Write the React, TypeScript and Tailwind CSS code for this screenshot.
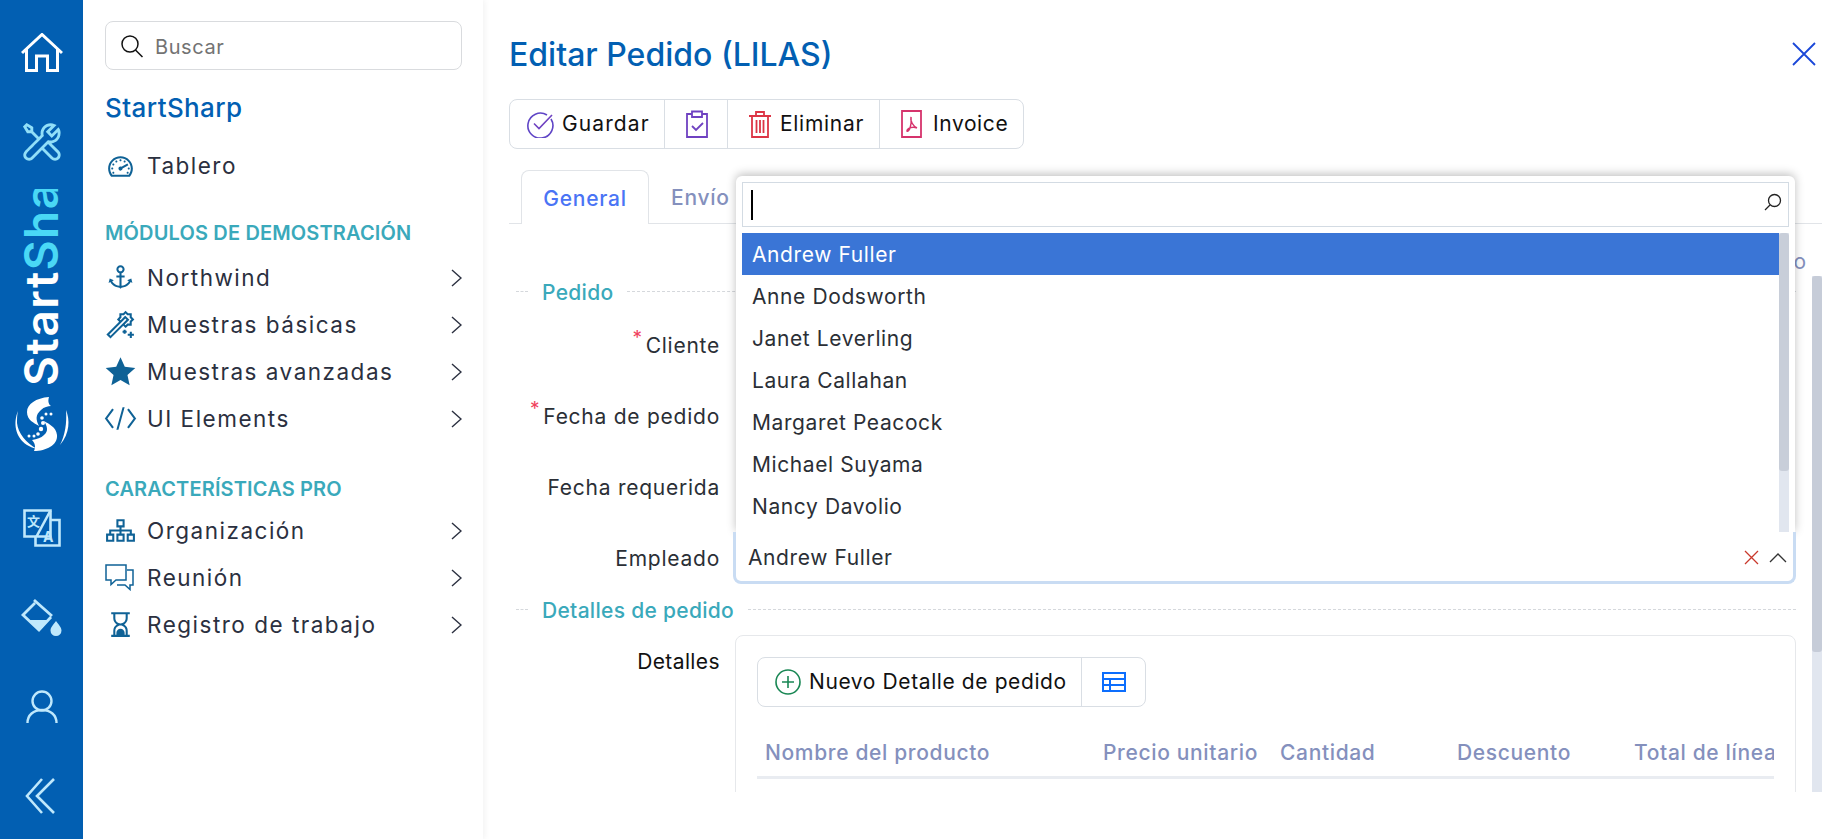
import {
  LiaAnchorSolid,
  LiaCodeSolid,
  LiaHourglassEndSolid,
  LiaMagicSolid,
  LiaSitemapSolid,
  LiaStarSolid,
  LiaTachometerAltSolid,
  LiaToolsSolid,
} from "react-icons/lia";

const employees = [
  "Anne Dodsworth",
  "Janet Leverling",
  "Laura Callahan",
  "Margaret Peacock",
  "Michael Suyama",
  "Nancy Davolio",
];

function Chevron() {
  return (
    <svg width="11" height="18" viewBox="0 0 11 18" fill="none" stroke="#2b3040" strokeWidth="1.4" className="ml-auto shrink-0">
      <path d="M1 1l9 8-9 8" />
    </svg>
  );
}

function NavItem({ icon, label }: { icon: React.ReactNode; label: string }) {
  return (
    <div className="flex h-[47px] items-center">
      <span className="flex w-[42px] shrink-0 -translate-x-[1px] text-[#0f6296]">{icon}</span>
      <span className="text-[22.5px] tracking-[1.5px] text-[#2b3040]">{label}</span>
      <Chevron />
    </div>
  );
}

function SectionTitle({ label, className }: { label: string; className: string }) {
  return (
    <div className={`flex items-center ${className}`}>
      <span className="w-[12px] border-t border-dashed border-[#d5d8dc]" />
      <span className="mx-[14px] pt-[3px] text-[21px] font-medium tracking-[0.3px] text-[#3aa9bb]">{label}</span>
      <span className="flex-1 border-t border-dashed border-[#d5d8dc]" />
    </div>
  );
}

function FormRow({ label, required, children }: { label: string; required?: boolean; children?: React.ReactNode }) {
  return (
    <div className="flex h-[71px] items-center">
      <div className="w-[211px] pt-[6px] text-right text-[21px] tracking-[0.75px] text-[#2b2f36]">
        {required && <span className="relative -top-[9px] mr-[3px] text-[19px] text-[#f0415d]">*</span>}
        {label}
      </div>
      <div className="ml-[13px] flex-1">{children}</div>
    </div>
  );
}

function Rail() {
  return (
    <aside className="flex w-[83px] shrink-0 flex-col items-center bg-[#025fb2]">
      <svg className="mt-[33px]" width="42" height="39" viewBox="0 0 42 39" fill="none" stroke="#fff" strokeWidth="3">
        <path d="M1 20L21 1.500 41 20M5.500 16v21.500h10V23h11v14.500h10V16" />
      </svg>
      <LiaToolsSolid className="mt-[47px] text-[#91dff8]" size={46} />
      <div className="mt-[24px] h-[197px] overflow-hidden whitespace-nowrap text-[46px] font-semibold leading-[41px] tracking-[1.5px] text-white [writing-mode:vertical-rl] rotate-180">
        Start<span className="text-[#4ad8f5]">Sharp</span>
      </div>
      {/* logo */}
      <svg className="mt-[7px]" width="64" height="64" viewBox="0 0 64 64" fill="#fff">
        <path d="M39 4C26 5 17 11 17 19c0 8 7 11 12 14-3-6-4-11 2-16 3-3 7-4 10-4-3-2-3-6-2-9z" />
        <path d="M24 58c12 0 24-6 23-16-1-8-8-11-13-14 3 5 5 10 0 14-3 3-7 4-12 5 3 3 4 7 2 11z" />
        <path d="M8 18C3 30 5 44 17 52c3 2 7 3 10 4C16 50 8 40 7 30c0-4 0-8 1-12z" />
        <path d="M56 17c4 10 4 23-6 35 5-10 7-22 6-35z" />
        <circle cx="36" cy="21" r="1.500" />
        <circle cx="41" cy="21" r="1.500" />
        <circle cx="32" cy="25" r="1.800" />
        <circle cx="33" cy="30" r="2" />
        <circle cx="31" cy="36" r="2.200" />
        <circle cx="28" cy="41" r="1.800" />
        <circle cx="24" cy="43" r="1.500" />
        <circle cx="19" cy="43" r="1.500" />
      </svg>
      <svg className="mt-[52px]" width="38" height="38" viewBox="0 0 38 38" fill="none" stroke="#bfe8fc" strokeWidth="2.600">
        <path d="M1.500 1.500h26v26h-26z" />
        <path d="M27.500 11h9v25.500h-24V27.500" />
        <path d="M27.500 1.500l-14 26" />
        <text x="4" y="17" fontSize="13" fontWeight="700" fill="#bfe8fc" stroke="none" fontFamily="Noto Sans CJK SC, sans-serif">文</text>
        <text x="20" y="33" fontSize="14" fontWeight="700" fill="#bfe8fc" stroke="none" fontFamily="Inter, sans-serif">A</text>
      </svg>
      <svg className="mt-[45px]" width="54" height="54" viewBox="0 0 54 54">
        <path d="M19 8l18 16M20 11L8 23l16 15 12-13" fill="none" stroke="#bfe8fc" strokeWidth="2.800" />
        <path d="M13 28h20l-9 9z" fill="#bfe8fc" />
        <path d="M41 29c3 4 5.500 6.500 5.500 9.500a5.500 5.500 0 0 1-11 0c0-3 2.500-5.500 5.500-9.500z" fill="#bfe8fc" />
      </svg>
      <svg className="mt-[44px]" width="32" height="34" viewBox="0 0 32 34" fill="none" stroke="#bfe8fc" strokeWidth="2.400">
        <circle cx="16" cy="11" r="9.500" />
        <path d="M1.500 33c0-8 6-13 14.500-13s14.500 5 14.500 13" />
      </svg>
      <svg className="mt-[54px] -translate-x-[2px]" width="30" height="36" viewBox="0 0 30 36" fill="none" stroke="#bfe8fc" strokeWidth="2.600">
        <path d="M17 1L2 18l15 17M29 1L12 18l17 17" />
      </svg>
    </aside>
  );
}

function Sidebar() {
  return (
    <nav className="w-[400px] shrink-0 bg-white pl-[22px] pr-[21px] pt-[21px] shadow-[2px_0_6px_rgba(0,0,0,0.05)]">
      <div className="flex h-[49px] w-[357px] items-center rounded-[8px] border border-[#d9dbde] pl-[14px]">
        <svg width="24" height="24" viewBox="0 0 24 24" fill="none" stroke="#111" strokeWidth="1.500">
          <circle cx="10" cy="10" r="8" />
          <path d="M15.500 16l7 7" />
        </svg>
        <span className="ml-[11px] pt-[2px] text-[20px] tracking-[0.6px] text-[#737373]">Buscar</span>
      </div>
      <div className="mt-[18px] text-[26px] font-medium tracking-[0.4px] text-[#025fb2]">StartSharp</div>
      <div className="mt-[19px] flex h-[40px] items-center">
        <span className="flex w-[42px] -translate-x-[1px] text-[#0f6296]">
          <LiaTachometerAltSolid size={33} />
        </span>
        <span className="text-[22.5px] tracking-[1.5px] text-[#2b3040]">Tablero</span>
      </div>
      <div className="mt-[32px] text-[20px] font-semibold tracking-[0.15px] text-[#3aa9bb]">MÓDULOS DE DEMOSTRACIÓN</div>
      <div className="mt-[6px]">
        <NavItem icon={<LiaAnchorSolid size={33} />} label="Northwind" />
        <NavItem icon={<LiaMagicSolid size={33} />} label="Muestras básicas" />
        <NavItem icon={<LiaStarSolid size={33} />} label="Muestras avanzadas" />
        <NavItem icon={<LiaCodeSolid size={33} />} label="UI Elements" />
      </div>
      <div className="mt-[32px] text-[20px] font-semibold tracking-[0.15px] text-[#3aa9bb]">CARACTERÍSTICAS PRO</div>
      <div className="mt-[3px]">
        <NavItem icon={<LiaSitemapSolid size={33} />} label="Organización" />
        <NavItem
          icon={
            <svg className="ml-[1px]" width="29" height="27" viewBox="0 0 29 27" fill="none" stroke="currentColor" strokeWidth="1.500">
              <path d="M1 1h20v15H11l-5 4.500V16H1zM22 6h6v15h-3v4.500L20 21h-8" />
            </svg>
          }
          label="Reunión"
        />
        <NavItem icon={<LiaHourglassEndSolid size={33} />} label="Registro de trabajo" />
      </div>
    </nav>
  );
}

function EmployeeDropdown() {
  return (
    <div className="absolute left-[246px] top-[176px] z-10 h-[357px] w-[1059px] rounded-t-[6px] bg-white px-[6px] pt-[6px] shadow-[0_-2px_10px_rgba(0,0,0,0.25)]">
      <div className="flex h-[45px] items-center justify-between border border-[#d3dbe3] pl-[8px] pr-[6px]">
        <span className="h-[30px] w-[2px] bg-black" />
        <svg className="-translate-y-[3px]" width="18" height="18" viewBox="0 0 18 18" fill="none" stroke="#222" strokeWidth="1.300">
          <circle cx="10.500" cy="7.500" r="6" />
          <path d="M6 12l-5 5" />
        </svg>
      </div>
      <div className="mt-[6px] flex">
        <ul className="flex-1 text-[21px] tracking-[0.6px] text-[#2b2f36]">
          <li className="flex h-[42px] items-center bg-[#3a75d6] pl-[10px] pt-[2px] text-white">Andrew Fuller</li>
          {employees.map((name) => (
            <li key={name} className="flex h-[42px] items-center pl-[10px] pt-[2px]">
              {name}
            </li>
          ))}
        </ul>
        <div className="h-[300px] w-[10px] bg-[#e1e6ef]">
          <div className="h-[238px] rounded-[3px] bg-[#c8ced9]" />
        </div>
      </div>
    </div>
  );
}

function Content() {
  return (
    <main className="relative flex min-w-0 flex-1 flex-col pl-[19px] pr-[26px]">
      <div className="flex h-[99px] shrink-0 items-start justify-between pt-[34px]">
        <h1 className="whitespace-nowrap text-[32px] font-medium leading-[42px] text-[#025fb2]">Editar Pedido (LILAS)</h1>
        <svg className="mr-[6px] mt-[8px]" width="24" height="24" viewBox="0 0 24 24" stroke="#1a47d8" strokeWidth="1.800">
          <path d="M1 1l22 22M23 1L1 23" />
        </svg>
      </div>

      <div className="flex h-[50px] w-[515px] shrink-0 items-stretch rounded-[8px] border border-[#d9dee4] text-[21px] tracking-[0.6px] text-[#111]">
        <div className="flex w-[154px] items-center pl-[16px]">
          <svg className="shrink-0" width="28" height="28" viewBox="0 0 28 28" fill="none" stroke="#6f42c1" strokeWidth="1.600">
            <path d="M25 9a12.500 12.500 0 1 1-4-4" stroke="#5f45c6" />
            <path d="M8 13.500l5 5L26 5" />
          </svg>
          <span className="ml-[8px] tracking-[1.100px]">Guardar</span>
        </div>
        <div className="flex w-[63px] items-center justify-center border-l border-[#d9dee4] pl-[2px]">
          <svg width="22" height="28" viewBox="0 0 22 28" fill="none" stroke="#6f42c1" strokeWidth="1.800">
            <path d="M6 4H1v23h20V4h-5M6 1.500h10V7H6z" />
            <path d="M6 16l4 4 7-7" />
          </svg>
        </div>
        <div className="flex w-[152px] items-center border-l border-[#d9dee4] pl-[21px]">
          <svg className="shrink-0" width="22" height="27" viewBox="0 0 22 27" fill="none" stroke="#dc3545" strokeWidth="1.800">
            <path d="M0 5h22M7 5V1h8v4M3 5v21h16V5M7.500 9v13M11 9v13M14.500 9v13" />
          </svg>
          <span className="ml-[9px] tracking-[0.7px]">Eliminar</span>
        </div>
        <div className="flex flex-1 items-center border-l border-[#d9dee4] pl-[21px]">
          <svg className="shrink-0" width="21" height="28" viewBox="0 0 21 28" fill="none" stroke="#d6336c" strokeWidth="1.800">
            <path d="M1 1h19v26H1z" />
            <path d="M10 7c-1 4 2 9 6 11-4-2-10 0-10 3 2 1 5-5 4-14z" strokeWidth="1.500" />
          </svg>
          <span className="ml-[11px]">Invoice</span>
        </div>
      </div>

      <div className="mt-[21px] flex h-[54px] shrink-0 border-b border-[#e1e4e8] pl-[12px] text-[21px] tracking-[0.75px]">
        <div className="-mb-px flex w-[128px] items-center justify-center rounded-t-[8px] border border-b-0 border-[#e1e4e8] bg-white pt-[2px] font-medium text-[#4a74f5]">
          General
        </div>
        <div className="ml-[22px] flex items-center pt-[2px] font-medium text-[#8490bd]">Envío</div>
      </div>

      <div className="flex h-[52px] shrink-0 justify-end pr-[16px] pt-[24px] text-[21px] leading-[28px] text-[#8490bd]">o</div>

      <div className="flex h-[516px] shrink-0">
        <div className="min-w-0 flex-1 overflow-hidden pr-[16px]">
          <SectionTitle label="Pedido" className="h-[30px] pl-[7px]" />
          <div className="pt-[1px]">
            <FormRow label="Cliente" required />
            <FormRow label="Fecha de pedido" required />
            <FormRow label="Fecha requerida" />
            <FormRow label="Empleado">
              <div className="relative z-20 mt-[4px] flex h-[52px] items-center rounded-b-[8px] border-[3px] border-t-0 border-[#c9dcf3] bg-white pl-[12px] pr-[6px] pt-[3px] text-[21px] tracking-[0.6px] text-[#2b2f36]">
                Andrew Fuller
                <svg className="ml-auto" width="15" height="15" viewBox="0 0 15 15" stroke="#c9392c" strokeWidth="1.300">
                  <path d="M1 1l13 13M14 1L1 14" />
                </svg>
                <svg className="ml-[10px]" width="18" height="10" viewBox="0 0 18 10" fill="none" stroke="#333" strokeWidth="1.300">
                  <path d="M1 9l8-8 8 8" />
                </svg>
              </div>
            </FormRow>
          </div>
          <SectionTitle label="Detalles de pedido" className="h-[34px] pl-[7px] pt-[2px]" />
          <div className="mt-[10px] flex">
            <div className="w-[211px] pt-[11px] text-right text-[21px] tracking-[0.4px] text-[#111]">Detalles</div>
            <div className="ml-[15px] h-[300px] min-w-0 flex-1 rounded-[8px] border border-[#e6e8eb] px-[21px] pt-[21px]">
              <div className="flex h-[50px] w-[389px] items-stretch rounded-[8px] border border-[#d9dee4] text-[21px] tracking-[0.6px] text-[#111]">
                <div className="flex w-[323px] items-center pl-[17px]">
                  <svg className="shrink-0" width="26" height="26" viewBox="0 0 26 26" fill="none" stroke="#198754" strokeWidth="1.600">
                    <circle cx="13" cy="13" r="12" />
                    <path d="M13 7v12M7 13h12" />
                  </svg>
                  <span className="ml-[8px] whitespace-nowrap">Nuevo Detalle de pedido</span>
                </div>
                <div className="flex flex-1 items-center justify-center border-l border-[#d9dee4]">
                  <svg width="24" height="20" viewBox="0 0 24 20" fill="none" stroke="#0d6efd" strokeWidth="2">
                    <path d="M1 1h22v18H1zM1 7h22M1 13h22M8 7v12" />
                  </svg>
                </div>
              </div>
              <div className="mt-[31px] flex h-[41px] w-[1017px] items-center overflow-hidden whitespace-nowrap border-b-[3px] border-[#e9ecf1] pb-[8px] text-[21px] font-medium tracking-[0.65px] text-[#8490bd]">
                <span className="w-[338px] shrink-0 pl-[8px]">Nombre del producto</span>
                <span className="w-[177px] shrink-0 pl-[8px]">Precio unitario</span>
                <span className="w-[177px] shrink-0 pl-[8px]">Cantidad</span>
                <span className="w-[177px] shrink-0 pl-[8px]">Descuento</span>
                <span className="w-[177px] shrink-0 pl-[8px]">Total de línea</span>
              </div>
            </div>
          </div>
        </div>
        <div className="h-full w-[10px] shrink-0 bg-[#e1e6ef]">
          <div className="h-[376px] rounded-[3px] bg-[#c6ccd8]" />
        </div>
      </div>

      <EmployeeDropdown />
    </main>
  );
}

export default function App() {
  return (
    <div className="flex h-[839px] w-[1848px] overflow-hidden bg-white font-['Inter',sans-serif]">
      <Rail />
      <Sidebar />
      <div className="w-[7px] shrink-0" />
      <Content />
    </div>
  );
}
